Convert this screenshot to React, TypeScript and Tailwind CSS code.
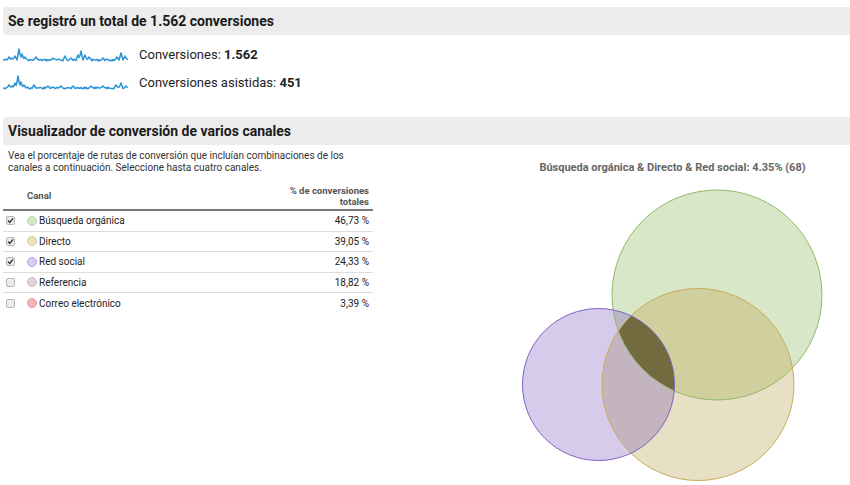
import React from 'react'

const font = { fontFamily: 'Roboto, "Liberation Sans", Arial, sans-serif' }

function spark(seed: number, spikes: Record<number, number>) {
  let s = seed
  const rnd = () => {
    s = (s * 9301 + 49297) % 233280
    return s / 233280
  }
  const pts: string[] = []
  for (let x = 0; x <= 125; x += 1) {
    let y = 13 + (rnd() - 0.5) * 1.8
    for (const key of Object.keys(spikes)) {
      const sx = Number(key)
      const d = Math.abs(x - sx)
      if (d < 2) y = Math.min(y, 13 - spikes[sx] * (1 - d / 2))
    }
    pts.push(`${x},${y.toFixed(1)}`)
  }
  return pts.join(' ')
}

const line1 = spark(7, { 6: 3, 9: 2, 12: 4, 16: 11, 19: 6, 22: 3, 33: 3, 50: 2, 62: 4, 68: 2, 75: 5, 78: 9, 82: 5, 86: 3, 100: 2, 114: 3, 118: 7, 122: 4 })
const line2 = spark(13, { 6: 3, 9: 2, 12: 5, 15: 12, 18: 6, 21: 3, 31: 3, 45: 2, 58: 2, 70: 2, 88: 2, 100: 2, 113: 3, 118: 5, 123: 2 })

function Spark({ pts }: { pts: string }) {
  return (
    <svg width="126" height="16" viewBox="0 0 126 16" className="shrink-0">
      <polyline points={pts} fill="none" stroke="#2a93d5" strokeWidth="1.5" strokeLinejoin="round" />
    </svg>
  )
}

function Check({ on }: { on: boolean }) {
  return (
    <span className="flex h-[9px] w-[9px] items-center justify-center rounded-[2px] border border-[#b5b5b5] bg-[#ececec]">
      {on && (
        <svg width="7" height="7" viewBox="0 0 7 7">
          <path d="M1 3.6 L2.8 5.4 L6 1.4" fill="none" stroke="#333" strokeWidth="1.4" />
        </svg>
      )}
    </span>
  )
}

const rows = [
  { name: 'Búsqueda orgánica', pct: '46,73 %', on: true, dot: 'bg-[#d4e8c4] border-[#b9d6a2]' },
  { name: 'Directo', pct: '39,05 %', on: true, dot: 'bg-[#ede2bf] border-[#d9c98f]' },
  { name: 'Red social', pct: '24,33 %', on: true, dot: 'bg-[#d8ccf2] border-[#b4a2e0]' },
  { name: 'Referencia', pct: '18,82 %', on: false, dot: 'bg-[#e6d3d9] border-[#d0b7c0]' },
  { name: 'Correo electrónico', pct: '3,39 %', on: false, dot: 'bg-[#f5b5b8] border-[#e99599]' },
]

function Venn() {
  const G = { cx: 222, cy: 113, r: 105 }
  const Y = { cx: 203, cy: 202.5, r: 96 }
  const P = { cx: 103.5, cy: 202.5, r: 76 }
  return (
    <svg width="355" height="305" viewBox="0 0 355 305">
      <defs>
        <clipPath id="cg"><circle cx={G.cx} cy={G.cy} r={G.r} /></clipPath>
        <clipPath id="cy"><circle cx={Y.cx} cy={Y.cy} r={Y.r} /></clipPath>
        <clipPath id="cp"><circle cx={P.cx} cy={P.cy} r={P.r} /></clipPath>
      </defs>
      <circle {...G} fill="#d9e7c9" />
      <circle {...Y} fill="#e8e0c5" />
      <circle {...P} fill="#d6cbea" />
      <g clipPath="url(#cg)"><circle {...Y} fill="#cfd09e" /></g>
      <g clipPath="url(#cp)"><circle {...Y} fill="#c4b4c0" /></g>
      <g clipPath="url(#cp)"><circle {...G} fill="#b9b8c6" /></g>
      <g clipPath="url(#cp)">
        <g clipPath="url(#cg)"><circle {...Y} fill="#736a40" /></g>
      </g>
      <circle {...G} fill="none" stroke="#93b868" strokeWidth="1" />
      <circle {...Y} fill="none" stroke="#c8ab5a" strokeWidth="1" />
      <circle {...P} fill="none" stroke="#7d63c2" strokeWidth="1" />
    </svg>
  )
}

export default function App() {
  return (
    <div className="h-[485px] w-[850px] overflow-hidden bg-white text-[#222]" style={font}>
      <div className="pt-[7px]">
        <div className="ml-[3px] flex h-[28px] items-center rounded-l-[3px] bg-[#ececec] pl-[5px] text-[14px] font-bold text-[#1a1a1a]">
          Se registró un total de 1.562 conversiones
        </div>
      </div>

      <div className="mt-[12px] flex flex-col gap-[12px] pl-[3px]">
        <div className="flex h-[16px] items-center gap-[10px]">
          <Spark pts={line1} />
          <span className="text-[13px]">
            Conversiones: <b>1.562</b>
          </span>
        </div>
        <div className="flex h-[16px] items-center gap-[10px]">
          <Spark pts={line2} />
          <span className="text-[13px]">
            Conversiones asistidas: <b>451</b>
          </span>
        </div>
      </div>

      <div className="mt-[26px]">
        <div className="ml-[3px] flex h-[28px] items-center rounded-l-[3px] bg-[#ececec] pl-[5px] text-[14px] font-bold text-[#1a1a1a]">
          Visualizador de conversión de varios canales
        </div>
      </div>

      <div className="flex">
        <div className="w-[373px] pl-[3px]">
          <p className="mt-[5px] w-[345px] pl-[5px] text-[10px] leading-[12px] text-[#333]">
            Vea el porcentaje de rutas de conversión que incluían combinaciones de los canales a continuación. Seleccione hasta cuatro canales.
          </p>
          <div className="mt-[9px] flex h-[28px] items-center border-b-2 border-[#777] text-[9.5px] font-bold text-[#555]">
            <span className="pl-[24px]">Canal</span>
            <span className="ml-auto pr-[4px] text-right leading-[11px]">
              % de conversiones
              <br />
              totales
            </span>
          </div>
          {rows.map((r, i) => (
            <div
              key={r.name}
              className={`flex h-[20.5px] items-center text-[10px] ${i < rows.length - 1 ? 'border-b border-[#ddd]' : ''}`}
            >
              <span className="pl-[3px]">
                <Check on={r.on} />
              </span>
              <span className={`ml-[12px] h-[10px] w-[10px] rounded-full border ${r.dot}`} />
              <span className="ml-[2px]">{r.name}</span>
              <span className="ml-auto pr-[4px]">{r.pct}</span>
            </div>
          ))}
        </div>

        <div className="ml-[122px] flex w-[355px] flex-col">
          <div className="mt-[15px] text-center text-[11px] font-bold text-[#666]">
            Búsqueda orgánica &amp; Directo &amp; Red social: 4.35% (68)
          </div>
          <div className="mt-[5px]">
            <Venn />
          </div>
        </div>
      </div>
    </div>
  )
}
